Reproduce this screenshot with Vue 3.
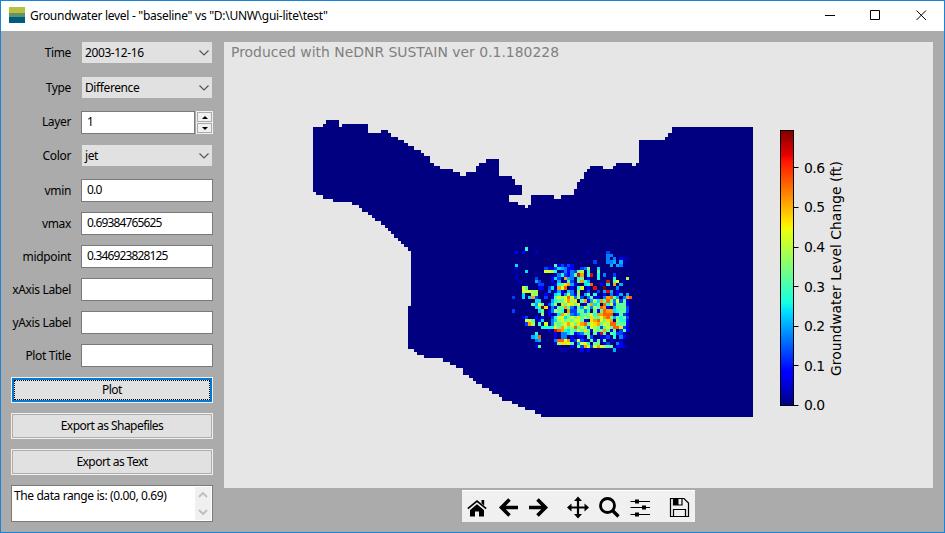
<script setup>
import { ref } from 'vue'

const time = ref('2003-12-16')
const type = ref('Difference')
const color = ref('jet')
const fields = [
  { label: 'vmin', value: '0.0' },
  { label: 'vmax', value: '0.69384765625' },
  { label: 'midpoint', value: '0.346923828125' },
  { label: 'xAxis Label', value: '' },
  { label: 'yAxis Label', value: '' },
  { label: 'Plot Title', value: '' }
]
const palette = ['#000080', '#0000b4', '#0000ff', '#0040ff', '#0080ff', '#00b0ff', '#00e0ff', '#20ffd8', '#60ff98', '#a0ff58', '#d8ff20', '#ffe000', '#ffa000', '#ff6000', '#e01000', '#800000']

// One hex digit per model cell, west to east; each digit indexes the jet palette.
const rows = [
  '00000700000000000000 000000000000000000',
  '00202000100000000000 000010000030000000',
  '00000000000000000000 000000000044000000',
  '00000000000000000000 000000000040402110',
  '00000000000000000000 000000300044505100',
  '00600000000000823132 000000000005054000',
  '00200000000322365422 003490060000000000',
  '00000600000aa9702424 389070080000000000',
  '00100000000000147324 8ec07e070400300000',
  '00100000300002630c54 078020070000700090',
  '00010000530002050283 08c7500000e08a0000',
  '00000100033000278bc5 20067d002060c05000',
  '0000a8000220360cad02 07a020e00f00040000',
  '0000aaa9900040252064 0900300305e5020000',
  '00006009900200671594 290580700204025050',
  '0300606c3003028a9ada 4930482204cd8504cd',
  '00000000660005788ac9 b08c2596c8d84a3820',
  '000000085a803690b8ab 8a028c680d7a388820',
  '0000000068fb04288c84 285a8498dc20588830',
  '030000000680249870c3 388470828dcc678830',
  '0000000000902026ca84 35889a7ccddd028320',
  '000023002020037aa68a 8b898b88acd8587830',
  '00000aa802600469a898 aa820bcda8bc097720',
  '000003c9070a04989aca 8bcd8abc8a9dd88820',
  '00000000007777a8ca89 d8a83a9838a8ddb320',
  '00000000000020edc768 7a8b82988c82803820',
  '00000000700000204468 23488082e808733100',
  '000000056d0000204402 022083002230704200',
  '000000004500004ddac2 3a3208281802001000',
  '0000000000000029bba8 05aa70880230042000',
  '00000000280000000002 083ca3aca988022100',
  '00000000000000001100 002020000000500000'
].map((r) => r.replace(' ', ''))

const edge = (start, i) => Math.round(start + i * 3.259)
const cells = []
rows.forEach((row, r) => {
  const y = edge(247.35, r)
  ;[...row].forEach((ch, c) => {
    if (ch === '0') return
    const x = edge(508.55, c)
    cells.push({ x, y, w: edge(508.55, c + 1) - x, h: edge(247.35, r + 1) - y, fill: palette[parseInt(ch, 16)] })
  })
})
const ticks = [0, 1, 2, 3, 4, 5, 6].map((n) => ({ label: '0.' + n, y: 405.5 - n * 39.6 }))
const basin =
  'M313 127H323V124H326V120H339V127H342V124H368V133H381V130H388V133H391V137H398V140H404V143H408V146H414V150H421V153H424V156H430V163H434V166H440V169H453V172H460V176H466V172H476V166H479V163H486V159H499V176H512V179H515V185H522V195H509V202H518V205H525V208H528V205H531V195H554V199H561V195H574V189H577V182H580V179H584V172H587V169H590V166H603V169H613V166H616V163H632V166H636V163H639V140H665V137H668V133H672V127H753V417H541V414H535V410H525V407H518V404H512V401H502V397H499V394H492V391H489V388H482V384H476V381H473V378H469V375H463V368H456V365H450V362H443V358H424V355H417V352H414V349H408V306H411V251H408V247H404V244H401V241H398V238H394V234H391V231H388V228H385V225H381V221H375V218H372V215H368V212H362V208H359V205H352V202H333V199H323V195H316V192H313Z'
</script>

<template>
  <div class="window">
    <header class="titlebar">
      <svg class="logo" width="16" height="16" shape-rendering="crispEdges">
        <path fill="#b9bf3e" d="M0 0h16v6H0z" /><path fill="#5d946b" d="M0 6h16v4H0z" />
        <path fill="#005c7c" d="M0 10h16v6H0z" />
      </svg>
      <span class="caption">Groundwater level - "baseline" vs "D:\UNW\gui-lite\test"</span>
      <svg class="controls" width="120" height="28" fill="none" stroke="#000">
        <path d="M5 13.500h10M50.500 8.500h9v9h-9zM96.500 8.500l9.500 9.500M106 8.500l-9.500 9.500" />
      </svg>
    </header>

    <main class="content">
      <form class="panel" @submit.prevent>
        <label class="line select-line time">
          <span>Time</span>
          <div class="select">{{ time }}<svg width="12" height="8"><path d="M1.500 1.500l4.500 4.500l4.500-4.500" /></svg></div>
        </label>
        <label class="line select-line type">
          <span>Type</span>
          <div class="select">{{ type }}<svg width="12" height="8"><path d="M1.500 1.500l4.500 4.500l4.500-4.500" /></svg></div>
        </label>
        <div class="line layer">
          <span>Layer</span>
          <div class="field short">1</div>
          <div class="spin">
            <i><svg width="6" height="3"><path d="M0 3l3-3 3 3z" /></svg></i>
            <i><svg width="6" height="3"><path d="M0 0l3 3 3-3z" /></svg></i>
          </div>
        </div>
        <label class="line select-line color">
          <span>Color</span>
          <div class="select">{{ color }}<svg width="12" height="8"><path d="M1.500 1.500l4.500 4.500l4.500-4.500" /></svg></div>
        </label>
        <div class="fields">
          <div v-for="f in fields" :key="f.label" class="line">
            <span>{{ f.label }}</span>
            <div class="field">{{ f.value }}</div>
          </div>
        </div>
        <div class="buttons">
          <button class="primary"><b>Plot</b></button>
          <button><b>Export as Shapefiles</b></button>
          <button><b>Export as Text</b></button>
        </div>
        <div class="message">
          <span>The data range is: (0.00, 0.69)</span>
          <div class="scroll">
            <svg width="10" height="6"><path d="M1 5l4-4 4 4" /></svg>
            <svg width="10" height="6"><path d="M1 1l4 4 4-4" /></svg>
          </div>
        </div>
      </form>

      <section class="plot-side">
        <svg class="figure" width="709" height="446" viewBox="224 42 709 446">
          <defs>
            <linearGradient id="jet" x1="0" y1="1" x2="0" y2="0">
              <stop offset="0" stop-color="#000080" /><stop offset=".11" stop-color="#0000ff" />
              <stop offset=".125" stop-color="#0000ff" /><stop offset=".34" stop-color="#00dcff" />
              <stop offset=".375" stop-color="#15ffe2" /><stop offset=".64" stop-color="#edff0a" />
              <stop offset=".66" stop-color="#ffec00" /><stop offset=".89" stop-color="#ff1300" />
              <stop offset=".91" stop-color="#e80000" /><stop offset="1" stop-color="#800000" />
            </linearGradient>
          </defs>
          <text class="credit" x="231" y="57" textLength="328">Produced with NeDNR SUSTAIN ver 0.1.180228</text>
          <g shape-rendering="crispEdges">
            <path :d="basin" fill="#000080" />
            <rect v-for="(c, i) in cells" :key="i" :x="c.x" :y="c.y" :width="c.w" :height="c.h" :fill="c.fill" />
          </g>
          <rect x="780.5" y="130.500" width="13" height="275" fill="url(#jet)" stroke="#000" />
          <g v-for="t in ticks" :key="t.label">
            <path :d="`M794 ${Math.round(t.y - 0.5) + 0.5}h4.500`" stroke="#000" />
            <text class="tick" x="804" :y="t.y + 4.800" textLength="21">{{ t.label }}</text>
          </g>
          <text class="axis" transform="translate(841 376) rotate(-90)" textLength="215">Groundwater Level Change (ft)</text>
        </svg>

        <nav class="toolbar">
          <svg width="233" height="31" viewBox="0 0 233 31">
            <path d="M8 19l7-6 7 6v6.500h-5v-5h-4v5H8z" />
            <path d="M5.800 18.200l9.200-7.700 9.200 7.700" fill="none" stroke="#f0f0f0" stroke-width="3.600" />
            <path d="M5.800 17.700l9.200-7.700 9.200 7.700" fill="none" stroke="#000" stroke-width="1.700" />
            <path d="M19.500 9h2.700v5.500l-2.700-2.300z" />
            <g fill="none" stroke="#000" stroke-width="3.600">
              <path d="M56 16.500H40M47.500 8.500l-8 8 8 8M67 16.500h16M75.500 8.500l8 8-8 8" />
            </g>
            <path d="M116 8v17M107 16.500h18" fill="none" stroke="#000" stroke-width="2.200" />
            <path d="M116 5.500l4 4.500h-8zM116 27.500l4-4.500h-8zM105 16.500l4.500-4v8zM127 16.500l-4.500-4v8z" />
            <circle cx="145.500" cy="14.500" r="7" fill="none" stroke="#000" stroke-width="2.800" />
            <path d="M150.500 19.500l6 6" stroke="#000" stroke-width="3.400" />
            <path d="M168.500 10.500h19.500M168.500 16.500h19.500M168.500 23.500h19.500" stroke="#000" stroke-width="1.200" />
            <path d="M173 8.500h4v4h-4zM180 14.500h4v4h-4zM173 21.500h4v4h-4z" />
            <path d="M208.500 7.500h13.500l4.500 4.500v13.500h-18zM211.500 25v-6.500h12v6.500M211.500 7.500v6.500h8.500V7.500" fill="none" stroke="#000" stroke-width="1.200" />
            <path d="M211.500 7.500h5v6.500h-5z" />
          </svg>
        </nav>
      </section>
    </main>
  </div>
</template>

<style>
body { margin: 0; overflow: hidden; }
</style>

<style scoped>
* { box-sizing: border-box; }
.window { width: 945px; height: 533px; border: 1px solid #1883d7; background: #ababab; font: 12px/16px "Noto Sans", sans-serif; letter-spacing: -.4px; color: #000; }
.titlebar { height: 30px; background: #fff; display: flex; align-items: flex-start; padding: 6px 0 0 8px; }
.logo { flex: none; }
.caption { margin: 1px 0 0 5px; white-space: nowrap; letter-spacing: -.28px; }
.controls { margin: -5px -1px 0 auto; padding-right: 5px; width: 125px; height: 28px; }
.content { display: flex; align-items: flex-start; }
.panel { width: 223px; padding: 11px 11px 0 10px; display: flex; flex-direction: column; }
.line { display: flex; align-items: center; height: 23px; }
.line > span { width: 60px; margin-right: 10px; text-align: right; white-space: nowrap; flex: none; letter-spacing: -.35px; }
.layer > span { padding-bottom: 1px; }
.select { width: 130px; height: 21px; margin-left: 1px; background: #e1e1e1; padding: 0 2px 0 3px; display: flex; align-items: center; justify-content: space-between; }
.select svg { fill: none; stroke: #555; stroke-width: 1.2; }
.select-line { height: 21px; }
.type { margin-top: 14px; }
.layer { margin-top: 13px; }
.color { margin-top: 11px; }
.field { width: 132px; height: 23px; border: 1px solid #7a7a7a; background: #fff; padding: 2px 5px; letter-spacing: -.85px; }
.short { width: 115px; }
.spin { width: 17px; height: 23px; margin-left: 1px; background: #f0f0f0; display: grid; gap: 1px; padding: 1px; }
.spin i { border: 1px solid #ababab; background: #f0f0f0; display: flex; align-items: center; justify-content: center; }
.fields { display: grid; gap: 10px; margin-top: 13px; }
.buttons { display: grid; gap: 10px; margin-top: 10px; }
button { height: 26px; padding: 1px; border: 1px solid #f0f0f0; background: #adadad; font: inherit; letter-spacing: -.54px; margin: 0; }
button b { display: block; font-weight: 400; height: 22px; line-height: 21px; background: #e1e1e1; }
.primary { background: #0078d7; padding: 2px; }
.primary b { height: 20px; line-height: 18px; border: 1px dotted #000; }
.message { margin-top: 10px; height: 37px; border: 1px solid #7a7a7a; background: #fff; display: flex; justify-content: space-between; padding: 1px; }
.message span { padding: 1px; white-space: nowrap; }
.scroll { width: 16px; background: #f0f0f0; display: flex; flex-direction: column; justify-content: space-between; align-items: center; padding: 5px 0; }
.scroll svg { fill: none; stroke: #bfbfbf; stroke-width: 2; }
.plot-side { width: 709px; padding-top: 11px; display: flex; flex-direction: column; align-items: center; }
.figure { display: block; background: #e6e6e6; font-family: "DejaVu Sans", sans-serif; letter-spacing: 0; }
.credit { font-size: 13.9px; fill: #808080; }
.tick, .axis { font-size: 13.9px; }
.toolbar { margin-top: 2px; height: 32px; background: #f0f0f0; border-top: 1px solid #fff; }
.toolbar svg { display: block; }
</style>
